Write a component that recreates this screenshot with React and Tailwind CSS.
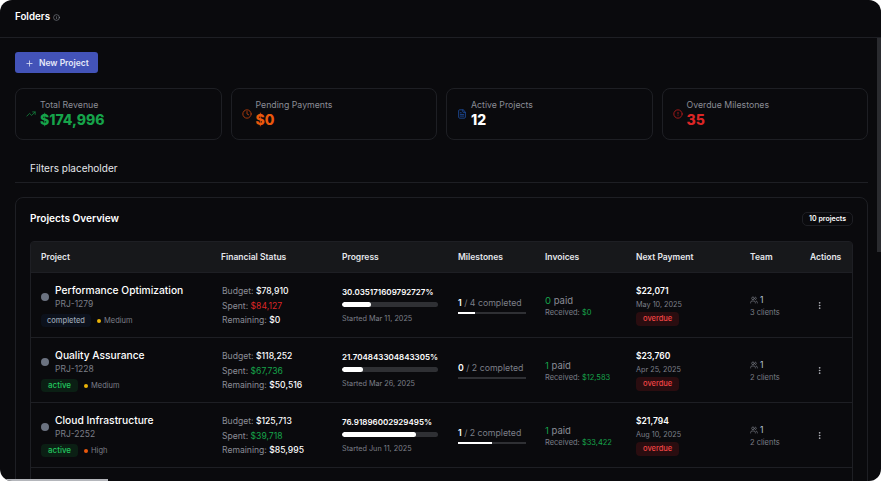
import React from 'react';
import { Plus, Info, TrendingUp, Clock, FileText, CircleAlert, Users, MoreVertical } from 'lucide-react';

const stats = [
  { label: 'Total Revenue', value: '$174,996', color: 'text-[#16a34a]', iconColor: 'text-[#15803d]', Icon: TrendingUp },
  { label: 'Pending Payments', value: '$0', color: 'text-[#ea580c]', iconColor: 'text-[#c2410c]', Icon: Clock },
  { label: 'Active Projects', value: '12', color: 'text-white', iconColor: 'text-[#1e4fa3]', Icon: FileText },
  { label: 'Overdue Milestones', value: '35', color: 'text-[#dc2626]', iconColor: 'text-[#b91c1c]', Icon: CircleAlert },
];

const projects = [
  {
    name: 'Performance Optimization', code: 'PRJ-1279', status: 'completed', priority: 'Medium',
    budget: '$78,910', spent: '$84,127', over: true, remaining: '$0',
    progress: '30.035171609792727%', pct: 30, started: 'Started Mar 11, 2025',
    done: 1, total: 4, paid: 0, received: '$0',
    payment: '$22,071', date: 'May 10, 2025', clients: '3 clients',
  },
  {
    name: 'Quality Assurance', code: 'PRJ-1228', status: 'active', priority: 'Medium',
    budget: '$118,252', spent: '$67,736', over: false, remaining: '$50,516',
    progress: '21.704843304843305%', pct: 21.7, started: 'Started Mar 26, 2025',
    done: 0, total: 2, paid: 1, received: '$12,583',
    payment: '$23,760', date: 'Apr 25, 2025', clients: '2 clients',
  },
  {
    name: 'Cloud Infrastructure', code: 'PRJ-2252', status: 'active', priority: 'High',
    budget: '$125,713', spent: '$39,718', over: false, remaining: '$85,995',
    progress: '76.91896002929495%', pct: 76.9, started: 'Started Jun 11, 2025',
    done: 1, total: 2, paid: 1, received: '$33,422',
    payment: '$21,794', date: 'Aug 10, 2025', clients: '2 clients',
  },
];

const cols = 'grid grid-cols-[180px_121px_116px_87px_91px_114px_60px_52px]';

const StatCard = ({ stat }) => (
  <div className="flex-1 h-[52px] rounded-lg border border-[#1e1f24] flex items-center pl-[10px] gap-[4px]">
    <stat.Icon className={`w-[10px] h-[10px] ${stat.iconColor}`} strokeWidth={2} />
    <div>
      <div className="text-[8.75px] leading-[12px] text-[#8a8d96]">{stat.label}</div>
      <div className={`text-[14px] leading-[18px] font-extrabold ${stat.color}`}>{stat.value}</div>
    </div>
  </div>
);

const Row = ({ p }) => (
  <div className={`${cols} h-[65px] border-b border-[#1e1f24] items-center`}>
    <div className="pl-[10px]">
      <div className="flex items-center gap-[6px]">
        <span className="w-[8px] h-[8px] rounded-full bg-[#6b7280]" />
        <div>
          <div className="text-[10.25px] leading-[14px] font-medium text-white whitespace-nowrap">{p.name}</div>
          <div className="text-[8.5px] leading-[12px] mt-[1px] text-[#7c7f88]">{p.code}</div>
        </div>
      </div>
      <div className="flex items-center gap-[6px] mt-[4px]">
        {p.status === 'active' ? (
          <span className="h-[13px] px-[7px] rounded-[4px] bg-[#0b1f14] text-[#22c55e] text-[8px] leading-[13px] font-medium">active</span>
        ) : (
          <span className="h-[13px] px-[6px] rounded-[4px] bg-[#0c111c] text-[#9aa3b2] text-[7.5px] leading-[13px] font-medium">completed</span>
        )}
        <span className="flex items-center gap-[3px] text-[7.5px] text-[#7c7f88]">
          <span className={`w-[4px] h-[4px] rounded-full ${p.priority === 'High' ? 'bg-[#ea580c]' : 'bg-[#eab308]'}`} />
          {p.priority}
        </span>
      </div>
    </div>
    <div className="pl-[11px] pt-[2px] text-[8.6px] leading-[14.5px] text-[#8a8d96] whitespace-nowrap">
      <div>Budget: <span className="text-white font-medium">{p.budget}</span></div>
      <div>Spent: <span className={p.over ? 'text-[#dc2626]' : 'text-[#16a34a]'}>{p.spent}</span></div>
      <div>Remaining: <span className="text-white font-medium">{p.remaining}</span></div>
    </div>
    <div className="pl-[10px]">
      <div className="text-[8px] leading-[12px] font-semibold text-white whitespace-nowrap">{p.progress}</div>
      <div className="w-[96px] h-[5px] mt-[4px] rounded-full bg-[#2f3034] overflow-hidden">
        <div className="h-full bg-white rounded-full" style={{ width: `${p.pct}%` }} />
      </div>
      <div className="text-[7.25px] leading-[10px] mt-[7px] text-[#7c7f88] whitespace-nowrap">{p.started}</div>
    </div>
    <div className="pl-[10px] pt-[1px]">
      <div className="text-[8.75px] leading-[12px] text-[#7c7f88] whitespace-nowrap">
        <span className="text-white font-semibold">{p.done}</span> / {p.total} completed
      </div>
      <div className="w-[68px] h-[2px] mt-[3px] bg-[#2f3034]">
        <div className="h-full bg-white" style={{ width: `${(p.done / p.total) * 100}%` }} />
      </div>
    </div>
    <div className="pl-[10px] pt-[2px]">
      <div className="text-[9.5px] leading-[12px] text-[#8a8d96]"><span className="text-[#16a34a]">{p.paid}</span> paid</div>
      <div className="text-[7.5px] leading-[10px] mt-[1px] text-[#7c7f88] whitespace-nowrap">Received: <span className="text-[#16a34a]">{p.received}</span></div>
    </div>
    <div className="pl-[10px]">
      <div className="text-[8.5px] leading-[12px] font-semibold text-white">{p.payment}</div>
      <div className="text-[7.25px] leading-[10px] mt-[3px] text-[#7c7f88]">{p.date}</div>
      <div className="w-fit h-[14px] mt-[2px] px-[7px] rounded-[4px] bg-[#2a0d10] text-[#ef4444] text-[7.5px] leading-[14px] font-medium">overdue</div>
    </div>
    <div className="pl-[10px] pt-[2px]">
      <div className="flex items-center gap-[2px] text-[8.5px] leading-[12px] text-[#b6c4d6]">
        <Users className="w-[8px] h-[8px] text-[#7c7f88]" />1
      </div>
      <div className="text-[7.5px] leading-[10px] mt-[2px] text-[#7c7f88] whitespace-nowrap">{p.clients}</div>
    </div>
    <div className="pl-[15px]">
      <MoreVertical className="w-[9px] h-[9px] text-[#c9cbd1]" />
    </div>
  </div>
);

export default function App() {
  return (
    <div className="w-[881px] h-[481px] bg-white overflow-hidden font-['Inter','Liberation_Sans',sans-serif]">
      <div className="relative h-full rounded-xl bg-[#0a0a0d] overflow-hidden">
        <header className="h-[38px] border-b border-[#1e1f24] pl-[15px] pb-[2px] flex items-center gap-[3px]">
          <span className="text-[9.75px] font-semibold text-white">Folders</span>
          <Info className="w-[7px] h-[7px] text-[#8a8d96]" />
        </header>
        <main className="pl-[15px] pr-[13px] pt-[14px]">
          <button className="h-[21px] w-[83px] pt-[1px] rounded-[3px] bg-[#4353b8] flex items-center pl-[10px] gap-[5px] text-[8.5px] font-semibold text-[#e6e9f8]">
            <Plus className="w-[9px] h-[9px]" />
            New Project
          </button>
          <div className="flex gap-[9px] mt-[15px]">
            {stats.map((s) => <StatCard key={s.label} stat={s} />)}
          </div>
          <div className="h-[43px] border-b border-[#1e1f24] pl-[15px] pt-[14px] text-[10px] leading-[29px] text-[#e5e7eb]">
            Filters placeholder
          </div>
          <section className="mt-[14px] rounded-t-lg border border-[#1e1f24] px-[14px] h-[400px]">
            <div className="h-[43px] flex items-center justify-between pb-[2px]">
              <span className="text-[10.1px] font-semibold text-white">Projects Overview</span>
              <span className="h-[14px] px-[6px] rounded-[5px] border border-[#1e1f24] text-[7px] leading-[12px] font-semibold text-white">10 projects</span>
            </div>
            <div className="rounded-t-[4px] border border-[#1e1f24]">
              <div className={`${cols} h-[31px] items-center bg-[#17181b] border-b border-[#1e1f24] text-[8.5px] font-semibold text-[#e5e7eb]`}>
                {['Project', 'Financial Status', 'Progress', 'Milestones', 'Invoices', 'Next Payment', 'Team', 'Actions'].map((h) => (
                  <div key={h} className="pl-[10px] whitespace-nowrap">{h}</div>
                ))}
              </div>
              {projects.map((p) => <Row key={p.code} p={p} />)}
              <div className="h-[40px]" />
            </div>
          </section>
        </main>
        <div className="absolute right-0 top-[38px] w-[4px] h-[214px] bg-[#2a2b2f]" />
        <div className="absolute left-0 bottom-0 w-[108px] h-[2px] bg-[#b4b6bb]" />
      </div>
    </div>
  );
}
